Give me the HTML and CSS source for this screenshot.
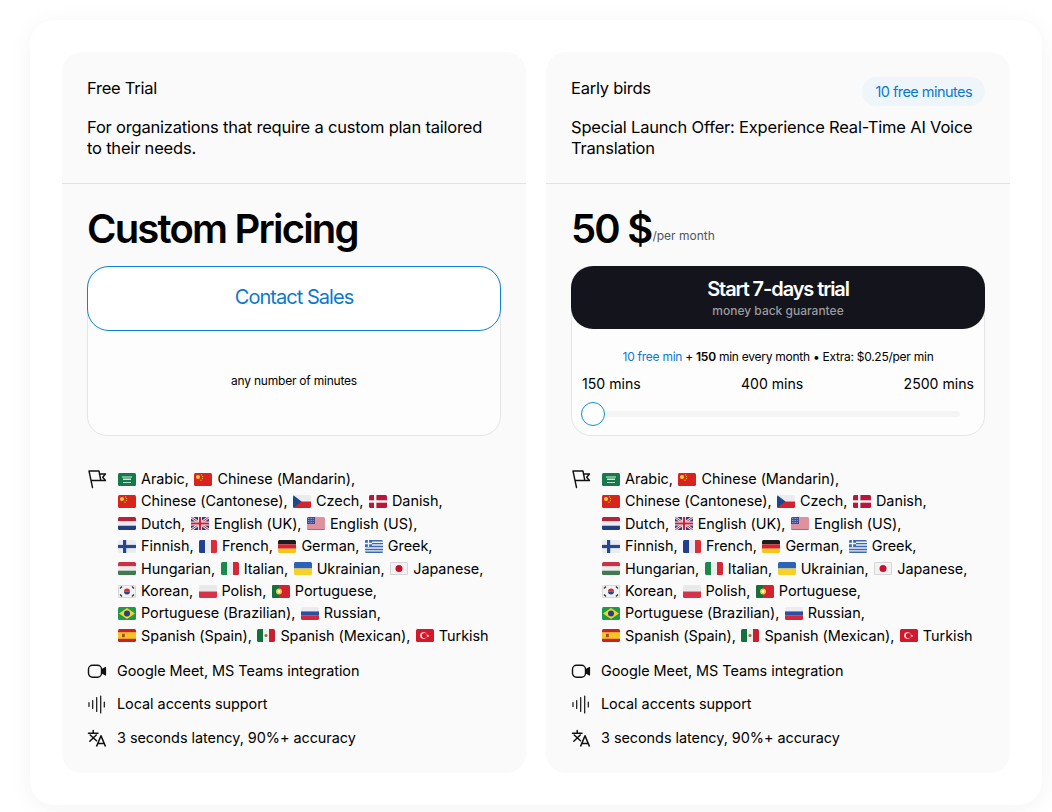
FILE: index.html
```html
<!DOCTYPE html>
<html lang="en">
<head>
<meta charset="utf-8">
<title>Pricing</title>
<link rel="stylesheet" href="styles.css">
</head>
<body>
<svg class="defs" xmlns="http://www.w3.org/2000/svg">
  <symbol id="sa" viewBox="0 0 18 13"><rect width="18" height="13" fill="#16794a"/><rect x="4" y="3.500" width="10" height="1" fill="#dcefe3"/><rect x="5" y="5.500" width="8" height="1.500" fill="#cfe6d8"/><rect x="5" y="9" width="8" height=".8" fill="#e8f4ec"/></symbol>
  <symbol id="cn" viewBox="0 0 18 13"><rect width="18" height="13" fill="#d8231f"/><circle cx="4" cy="4" r="2" fill="#f6d12e"/><circle cx="7.600" cy="1.800" r=".6" fill="#f6d12e"/><circle cx="8.600" cy="3.600" r=".6" fill="#f6d12e"/><circle cx="8.400" cy="5.600" r=".6" fill="#f6d12e"/><circle cx="7" cy="7.200" r=".6" fill="#f6d12e"/></symbol>
  <symbol id="cz" viewBox="0 0 18 13"><rect width="18" height="6.500" fill="#ececef"/><rect y="6.500" width="18" height="6.500" fill="#d3232e"/><path d="M0 0 8.500 6.500 0 13Z" fill="#1b4a8c"/></symbol>
  <symbol id="dk" viewBox="0 0 18 13"><rect width="18" height="13" fill="#b8163a"/><rect x="5" width="2.400" height="13" fill="#f5f5f5"/><rect y="5.300" width="18" height="2.400" fill="#f5f5f5"/></symbol>
  <symbol id="nl" viewBox="0 0 18 13"><rect width="18" height="4.400" fill="#b3243b"/><rect y="4.400" width="18" height="4.300" fill="#ececf0"/><rect y="8.700" width="18" height="4.300" fill="#213f7f"/></symbol>
  <symbol id="gb" viewBox="0 0 18 13"><rect width="18" height="13" fill="#2b3f87"/><path d="M0 0 18 13M18 0 0 13" stroke="#f4f4f4" stroke-width="2.600"/><path d="M0 0 18 13M18 0 0 13" stroke="#c8243d" stroke-width="1"/><path d="M9 0V13M0 6.500H18" stroke="#f4f4f4" stroke-width="4"/><path d="M9 0V13M0 6.500H18" stroke="#c8243d" stroke-width="2.200"/></symbol>
  <symbol id="us" viewBox="0 0 18 13"><rect width="18" height="13" fill="#f0f0f3"/><path d="M0 1H18M0 3H18M0 5H18M0 7H18M0 9H18M0 11H18M0 12.700H18" stroke="#c9344a" stroke-width="1"/><rect width="8" height="7" fill="#3b4f98"/><path d="M1 1.500H7M1 3.500H7M1 5.500H7" stroke="#c9d3ee" stroke-width=".7" stroke-dasharray=".8 .8"/></symbol>
  <symbol id="fi" viewBox="0 0 18 13"><rect width="18" height="13" fill="#e9ecf1"/><rect x="5" width="3.200" height="13" fill="#24478f"/><rect y="4.900" width="18" height="3.200" fill="#24478f"/></symbol>
  <symbol id="fr" viewBox="0 0 18 13"><rect width="6" height="13" fill="#22408f"/><rect x="6" width="6" height="13" fill="#ececf0"/><rect x="12" width="6" height="13" fill="#dd2c3a"/></symbol>
  <symbol id="de" viewBox="0 0 18 13"><rect width="18" height="4.400" fill="#1c1c1c"/><rect y="4.400" width="18" height="4.300" fill="#d9202b"/><rect y="8.700" width="18" height="4.300" fill="#f5c518"/></symbol>
  <symbol id="gr" viewBox="0 0 18 13"><rect width="18" height="13" fill="#eef1f6"/><path d="M0 .7H18M0 3.600H18M0 6.500H18M0 9.400H18M0 12.300H18" stroke="#3a68b5" stroke-width="1.450"/><rect width="7" height="7" fill="#3a68b5"/><path d="M3.500 0V7M0 3.500H7" stroke="#f4f6fa" stroke-width="1.300"/></symbol>
  <symbol id="hu" viewBox="0 0 18 13"><rect width="18" height="4.400" fill="#c73345"/><rect y="4.400" width="18" height="4.300" fill="#ececec"/><rect y="8.700" width="18" height="4.300" fill="#3f7a50"/></symbol>
  <symbol id="it" viewBox="0 0 18 13"><rect width="6" height="13" fill="#1c8a4b"/><rect x="6" width="6" height="13" fill="#eeeeee"/><rect x="12" width="6" height="13" fill="#d3283a"/></symbol>
  <symbol id="ua" viewBox="0 0 18 13"><rect width="18" height="6.500" fill="#2b63b8"/><rect y="6.500" width="18" height="6.500" fill="#f7d128"/></symbol>
  <symbol id="jp" viewBox="0 0 18 13"><rect x=".4" y=".4" width="17.200" height="12.200" fill="#f2f2f2" stroke="#cfcfcf" stroke-width=".8"/><circle cx="9" cy="6.500" r="3.500" fill="#c8102e"/></symbol>
  <symbol id="kr" viewBox="0 0 18 13"><rect x=".4" y=".4" width="17.200" height="12.200" fill="#f2f2f2" stroke="#d4d4d4" stroke-width=".8"/><path d="M6 6.500a3 3 0 0 1 6 0Z" fill="#cd2e3a"/><path d="M6 6.500a3 3 0 0 0 6 0Z" fill="#1f4a92"/><path d="M2 3.500 4 1.500M14 1.500 16 3.500M2 9.500 4 11.500M14 11.500 16 9.500" stroke="#333" stroke-width="1.300"/></symbol>
  <symbol id="pl" viewBox="0 0 18 13"><rect width="18" height="6.500" fill="#e9e9e9"/><rect y="6.500" width="18" height="6.500" fill="#d6324a"/></symbol>
  <symbol id="pt" viewBox="0 0 18 13"><rect width="18" height="13" fill="#d3232e"/><rect width="7" height="13" fill="#14713f"/><circle cx="7" cy="6.500" r="3" fill="#f4c723"/><circle cx="7" cy="6.500" r="1.400" fill="#f4f4f4"/></symbol>
  <symbol id="br" viewBox="0 0 18 13"><rect width="18" height="13" fill="#1e9a4c"/><path d="M9 1 17 6.500 9 12 1 6.500Z" fill="#f6d228"/><circle cx="9" cy="6.500" r="3" fill="#23408f"/></symbol>
  <symbol id="ru" viewBox="0 0 18 13"><rect width="18" height="4.400" fill="#ececf0"/><rect y="4.400" width="18" height="4.300" fill="#2c4ea3"/><rect y="8.700" width="18" height="4.300" fill="#d4283a"/></symbol>
  <symbol id="es" viewBox="0 0 18 13"><rect width="18" height="13" fill="#c9202c"/><rect y="3.200" width="18" height="6.600" fill="#f6c523"/><rect x="4" y="4.800" width="2.800" height="3.400" fill="#a8492a"/></symbol>
  <symbol id="mx" viewBox="0 0 18 13"><rect width="6" height="13" fill="#14713f"/><rect x="6" width="6" height="13" fill="#eeeeee"/><rect x="12" width="6" height="13" fill="#c8202f"/><circle cx="9" cy="6.500" r="1.500" fill="#8b6b3a"/></symbol>
  <symbol id="tr" viewBox="0 0 18 13"><rect width="18" height="13" fill="#d3182b"/><circle cx="7.500" cy="6.500" r="3.300" fill="#f5f5f5"/><circle cx="8.400" cy="6.500" r="2.600" fill="#d3182b"/><path d="M11.500 5.200 12.100 6.200 13.300 6 12.500 6.900 13.100 8 12 7.500 11.100 8.300 11.200 7.100 10.200 6.500 11.300 6.300Z" fill="#f5f5f5"/></symbol>
  <symbol id="i-flags" viewBox="0 0 20 20"><path d="M2 2 5.500 18.500M2 2H12L13.800 11.500H4M12.300 5H18.500L15.700 8.300 18.500 11.500H9.500" fill="none" stroke="currentColor" stroke-width="1.400" stroke-linecap="round" stroke-linejoin="round"/></symbol>
  <symbol id="i-video" viewBox="0 0 20 20"><rect x="1.500" y="4.200" width="13" height="12" rx="4" fill="none" stroke="currentColor" stroke-width="1.400"/><path d="M15 8.500 18.500 6.500V14L15 12Z" fill="currentColor" stroke="currentColor" stroke-width="1.200" stroke-linejoin="round"/></symbol>
  <symbol id="i-wave" viewBox="0 0 20 20"><path d="M2 8.500V12.500M5.700 6.500V14.500M9.700 3.500V17.500M13.700 2V19M17.300 8V13" fill="none" stroke="currentColor" stroke-width="1.200" stroke-linecap="round"/></symbol>
  <symbol id="i-translate" viewBox="0 0 20 20"><path d="M1.500 5.200H11M6.200 2.500V5.200M3.200 7 9.500 12.800M9.300 7 2.800 13.200" fill="none" stroke="currentColor" stroke-width="1.500" stroke-linecap="round"/><path d="M9.500 18.500 14 7.800 18.500 18.500M11 15.500H17" fill="none" stroke="currentColor" stroke-width="1.600" stroke-linejoin="round"/></symbol>
</svg>

<main class="shell">
  <section class="plans">
    <article class="plan">
      <header class="plan-head">
        <div class="plan-title-row"><h2 class="plan-title">Free Trial</h2></div>
        <p class="plan-desc">For organizations that require a custom plan tailored to their needs.</p>
      </header>
      <div class="plan-body">
        <div class="price"><span class="price-value">Custom Pricing</span></div>
        <div class="usage">
          <a class="btn btn-outline">Contact Sales</a>
          <p class="usage-note">any number of minutes</p>
        </div>
        <ul class="features">
          <li class="feature feature-langs">
            <svg class="icon"><use href="#i-flags"/></svg>
            <div class="langs">
              <span class="lang"><svg class="flag"><use href="#sa"/></svg>Arabic,</span>
              <span class="lang"><svg class="flag"><use href="#cn"/></svg>Chinese (Mandarin),</span>
              <span class="lang"><svg class="flag"><use href="#cn"/></svg>Chinese (Cantonese),</span>
              <span class="lang"><svg class="flag"><use href="#cz"/></svg>Czech,</span>
              <span class="lang"><svg class="flag"><use href="#dk"/></svg>Danish,</span>
              <span class="lang"><svg class="flag"><use href="#nl"/></svg>Dutch,</span>
              <span class="lang"><svg class="flag"><use href="#gb"/></svg>English (UK),</span>
              <span class="lang"><svg class="flag"><use href="#us"/></svg>English (US),</span>
              <span class="lang"><svg class="flag"><use href="#fi"/></svg>Finnish,</span>
              <span class="lang"><svg class="flag"><use href="#fr"/></svg>French,</span>
              <span class="lang"><svg class="flag"><use href="#de"/></svg>German,</span>
              <span class="lang"><svg class="flag"><use href="#gr"/></svg>Greek,</span>
              <span class="lang"><svg class="flag"><use href="#hu"/></svg>Hungarian,</span>
              <span class="lang"><svg class="flag"><use href="#it"/></svg>Italian,</span>
              <span class="lang"><svg class="flag"><use href="#ua"/></svg>Ukrainian,</span>
              <span class="lang"><svg class="flag"><use href="#jp"/></svg>Japanese,</span>
              <span class="lang"><svg class="flag"><use href="#kr"/></svg>Korean,</span>
              <span class="lang"><svg class="flag"><use href="#pl"/></svg>Polish,</span>
              <span class="lang"><svg class="flag"><use href="#pt"/></svg>Portuguese,</span>
              <span class="lang"><svg class="flag"><use href="#br"/></svg>Portuguese (Brazilian),</span>
              <span class="lang"><svg class="flag"><use href="#ru"/></svg>Russian,</span>
              <span class="lang"><svg class="flag"><use href="#es"/></svg>Spanish (Spain),</span>
              <span class="lang"><svg class="flag"><use href="#mx"/></svg>Spanish (Mexican),</span>
              <span class="lang"><svg class="flag"><use href="#tr"/></svg>Turkish</span>
            </div>
          </li>
          <li class="feature"><svg class="icon"><use href="#i-video"/></svg><span>Google Meet, MS Teams integration</span></li>
          <li class="feature"><svg class="icon"><use href="#i-wave"/></svg><span>Local accents support</span></li>
          <li class="feature"><svg class="icon"><use href="#i-translate"/></svg><span>3 seconds latency, 90%+ accuracy</span></li>
        </ul>
      </div>
    </article>

    <article class="plan">
      <header class="plan-head">
        <div class="plan-title-row"><h2 class="plan-title">Early birds</h2><span class="pill">10 free minutes</span></div>
        <p class="plan-desc">Special Launch Offer: Experience Real-Time AI Voice Translation</p>
      </header>
      <div class="plan-body">
        <div class="price"><span class="price-value">50 $</span><span class="price-unit">/per month</span></div>
        <div class="usage">
          <a class="btn btn-dark"><span class="btn-main">Start 7-days trial</span><span class="btn-sub">money back guarantee</span></a>
          <p class="usage-line"><span class="accent">10 free min</span> + <b class="semi">150</b> min every month • Extra: $0.25/per min</p>
          <div class="ticks"><span>150 mins</span><span>400 mins</span><span>2500 mins</span></div>
          <div class="slider"><span class="slider-thumb"></span></div>
        </div>
        <ul class="features">
          <li class="feature feature-langs">
            <svg class="icon"><use href="#i-flags"/></svg>
            <div class="langs">
              <span class="lang"><svg class="flag"><use href="#sa"/></svg>Arabic,</span>
              <span class="lang"><svg class="flag"><use href="#cn"/></svg>Chinese (Mandarin),</span>
              <span class="lang"><svg class="flag"><use href="#cn"/></svg>Chinese (Cantonese),</span>
              <span class="lang"><svg class="flag"><use href="#cz"/></svg>Czech,</span>
              <span class="lang"><svg class="flag"><use href="#dk"/></svg>Danish,</span>
              <span class="lang"><svg class="flag"><use href="#nl"/></svg>Dutch,</span>
              <span class="lang"><svg class="flag"><use href="#gb"/></svg>English (UK),</span>
              <span class="lang"><svg class="flag"><use href="#us"/></svg>English (US),</span>
              <span class="lang"><svg class="flag"><use href="#fi"/></svg>Finnish,</span>
              <span class="lang"><svg class="flag"><use href="#fr"/></svg>French,</span>
              <span class="lang"><svg class="flag"><use href="#de"/></svg>German,</span>
              <span class="lang"><svg class="flag"><use href="#gr"/></svg>Greek,</span>
              <span class="lang"><svg class="flag"><use href="#hu"/></svg>Hungarian,</span>
              <span class="lang"><svg class="flag"><use href="#it"/></svg>Italian,</span>
              <span class="lang"><svg class="flag"><use href="#ua"/></svg>Ukrainian,</span>
              <span class="lang"><svg class="flag"><use href="#jp"/></svg>Japanese,</span>
              <span class="lang"><svg class="flag"><use href="#kr"/></svg>Korean,</span>
              <span class="lang"><svg class="flag"><use href="#pl"/></svg>Polish,</span>
              <span class="lang"><svg class="flag"><use href="#pt"/></svg>Portuguese,</span>
              <span class="lang"><svg class="flag"><use href="#br"/></svg>Portuguese (Brazilian),</span>
              <span class="lang"><svg class="flag"><use href="#ru"/></svg>Russian,</span>
              <span class="lang"><svg class="flag"><use href="#es"/></svg>Spanish (Spain),</span>
              <span class="lang"><svg class="flag"><use href="#mx"/></svg>Spanish (Mexican),</span>
              <span class="lang"><svg class="flag"><use href="#tr"/></svg>Turkish</span>
            </div>
          </li>
          <li class="feature"><svg class="icon"><use href="#i-video"/></svg><span>Google Meet, MS Teams integration</span></li>
          <li class="feature"><svg class="icon"><use href="#i-wave"/></svg><span>Local accents support</span></li>
          <li class="feature"><svg class="icon"><use href="#i-translate"/></svg><span>3 seconds latency, 90%+ accuracy</span></li>
        </ul>
      </div>
    </article>
  </section>
</main>
</body>
</html>
```

FILE: styles.css
```css
* { box-sizing: border-box; }
html, body { margin: 0; padding: 0; }
body {
  background: #fff;
  color: #000;
  font-family: Inter, "Noto Sans", sans-serif;
  font-size: 16px;
  height: 812px;
  overflow: hidden;
}
.defs { display: none; }
.shell {
  width: 1012px;
  height: 785px;
  margin: 20px 0 0 30px;
  padding: 32px;
  background: #fff;
  border-radius: 24px;
  box-shadow: 0 4px 24px rgba(0, 0, 0, .05);
}
.plans {
  display: grid;
  grid-template-columns: 464px 464px;
  gap: 20px;
}
.plan {
  height: 721px;
  background: #fafafa;
  border-radius: 20px;
}
.plan-head {
  height: 132px;
  padding: 25px 25px 0;
  border-bottom: 1px solid #e3e3e3;
}
.plan-title-row {
  display: flex;
  justify-content: space-between;
  align-items: flex-start;
  height: 22px;
}
.plan-title {
  margin: 0;
  font-size: 16.500px;
  font-weight: 420;
  line-height: 22px;
  letter-spacing: -.25px;
}
.pill {
  display: flex;
  align-items: center;
  height: 29px;
  padding: 0 13px;
  border-radius: 15px;
  background: #eff6fb;
  color: #0b78cf;
  font-size: 14.500px;
  font-weight: 420;
  letter-spacing: -.55px;
  white-space: nowrap;
}
.plan-desc {
  margin: 18px 0 0;
  font-size: 16.500px;
  font-weight: 420;
  line-height: 21px;
  letter-spacing: -.2px;
}
.plan-body { padding: 0 25px; }
.price {
  display: flex;
  align-items: flex-end;
  height: 82px;
  padding-top: 20px;
  padding-bottom: 12px;
}
.price-value {
  font-size: 40px;
  font-weight: 600;
  line-height: 50px;
  letter-spacing: -1.800px;
}
.price-unit {
  margin: 0 0 10px 1px;
  color: #4b5563;
  font-size: 12px;
  line-height: 16px;
}
.usage {
  display: flex;
  flex-direction: column;
  height: 170px;
  background: #fdfdfd;
  border: 1px solid #e5e5e5;
  border-radius: 20px;
}
.btn {
  display: flex;
  flex-direction: column;
  align-items: center;
  justify-content: center;
  flex: none;
  margin: -1px -1px 0;
  border-radius: 22px;
}
.btn-outline {
  height: 65px;
  padding-bottom: 4px;
  background: #fff;
  border: 1px solid #0b84d6;
  color: #0b78cf;
  font-size: 20px;
  letter-spacing: -.96px;
}
.btn-dark {
  height: 63px;
  padding-top: 2px;
  background: #14151c;
  color: #fff;
}
.btn-main {
  font-size: 20px;
  font-weight: 600;
  line-height: 25px;
  letter-spacing: -1.100px;
}
.btn-sub {
  color: #9b9b9f;
  font-size: 12px;
  font-weight: 500;
  line-height: 18px;
}
.usage-note {
  display: flex;
  flex: 1;
  align-items: center;
  justify-content: center;
  margin: 0 0 6px;
  font-size: 12px;
  font-weight: 420;
  letter-spacing: -.22px;
}
.usage-line {
  margin: 20px 0 0;
  font-size: 12px;
  font-weight: 420;
  line-height: 16px;
  text-align: center;
  letter-spacing: -.26px;
}
.accent { color: #0b78cf; }
.semi { font-weight: 600; }
.ticks {
  display: flex;
  justify-content: space-between;
  margin-top: 9px;
  padding: 0 10px;
  font-size: 14.100px;
  font-weight: 420;
  line-height: 20px;
}
.slider {
  position: relative;
  height: 6px;
  margin: 17px 24px 0 20px;
  background: #f5f5f5;
  border-radius: 3px;
}
.slider-thumb {
  position: absolute;
  top: -9px;
  left: -11px;
  width: 24px;
  height: 24px;
  background: #fff;
  border: 1.500px solid #0b8fd6;
  border-radius: 50%;
}
.features {
  display: flex;
  flex-direction: column;
  gap: 11px;
  margin: 32px 0 0;
  padding: 0;
  list-style: none;
}
.feature {
  display: flex;
  gap: 10px;
  font-size: 14.450px;
  font-weight: 420;
  line-height: 22.400px;
  letter-spacing: -.05px;
}
.feature-langs { margin-bottom: 1.500px; }
.icon {
  flex: none;
  width: 20px;
  height: 20px;
  margin-top: 1px;
  color: #111;
}
.langs { flex: 1; margin-left: 1px; padding-right: 7px; }
.lang { display: inline-block; margin-right: 1.500px; white-space: nowrap; }
.flag {
  width: 18px;
  height: 13px;
  margin-right: 5px;
  vertical-align: -1.500px;
  border-radius: 1.500px;
}
```
